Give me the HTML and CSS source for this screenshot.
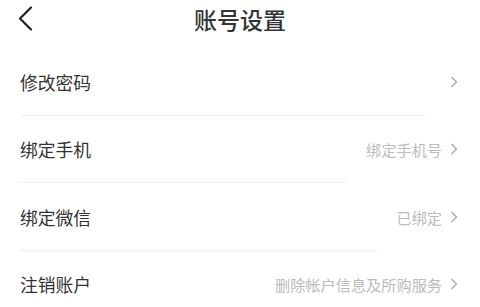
FILE: index.html
```html
<!DOCTYPE html>
<html lang="zh-CN">
<head>
  <meta charset="utf-8">
  <title>账号设置</title>
  <meta name="viewport" content="width=device-width, initial-scale=1">
  <link rel="stylesheet" href="styles.css">
</head>
<body>
  <div class="topbar">
    <a class="back" href="#">
      <svg width="16" height="25" viewBox="0 0 16 25">
        <polyline points="14,1.5 3,12.5 14,23.5" fill="none" stroke="#222" stroke-width="2.2" stroke-linecap="round" stroke-linejoin="round"/>
      </svg>
    </a>
    <h1>账号设置</h1>
  </div>
  <div class="list">
    <div class="item">
      <span class="label">修改密码</span>
      <span class="extra">
        <svg class="arrow" width="8" height="12" viewBox="0 0 8 12"><polyline points="1.5,1 6.5,6 1.5,11" fill="none" stroke="#aaa" stroke-width="1.4"/></svg>
      </span>
      <div class="line line-1"></div>
    </div>
    <div class="item">
      <span class="label">绑定手机</span>
      <span class="extra">绑定手机号
        <svg class="arrow" width="8" height="12" viewBox="0 0 8 12"><polyline points="1.5,1 6.5,6 1.5,11" fill="none" stroke="#aaa" stroke-width="1.4"/></svg>
      </span>
      <div class="line line-2"></div>
    </div>
    <div class="item">
      <span class="label">绑定微信</span>
      <span class="extra">已绑定
        <svg class="arrow" width="8" height="12" viewBox="0 0 8 12"><polyline points="1.5,1 6.5,6 1.5,11" fill="none" stroke="#aaa" stroke-width="1.4"/></svg>
      </span>
      <div class="line line-3"></div>
    </div>
    <div class="item">
      <span class="label">注销账户</span>
      <span class="extra">删除帐户信息及所购服务
        <svg class="arrow" width="8" height="12" viewBox="0 0 8 12"><polyline points="1.5,1 6.5,6 1.5,11" fill="none" stroke="#aaa" stroke-width="1.4"/></svg>
      </span>
    </div>
  </div>
</body>
</html>
```

FILE: styles.css
```css
html {
  font-family: "Noto Sans CJK SC", "Noto Sans", sans-serif;
}
body {
  margin: 0;
  background: #fff;
  color: #333;
}
.topbar {
  position: relative;
  height: 38px;
  display: flex;
  align-items: center;
  justify-content: center;
}
.topbar h1 {
  margin: 0;
  font-size: 23px;
  font-weight: 500;
  color: #333;
  line-height: 1;
}
.back {
  position: absolute;
  left: 17px;
  top: 6px;
  display: block;
  line-height: 0;
}
.list {
  padding-top: 10px;
}
.item {
  position: relative;
  height: 67.5px;
  display: flex;
  align-items: center;
  justify-content: space-between;
  padding: 0 22px 0 20px;
}
.label {
  font-size: 17.8px;
  color: #333;
}
.extra {
  display: flex;
  align-items: center;
  font-size: 15.2px;
  color: #bbb;
}
.arrow {
  margin-left: 8px;
}
.line {
  position: absolute;
  left: 20px;
  bottom: 0;
  height: 1px;
  background: #f2f2f2;
}
.line-1 {
  width: 405px;
}
.line-2 {
  left: 18px;
  width: 329px;
}
.line-3 {
  width: 358px;
}
```
